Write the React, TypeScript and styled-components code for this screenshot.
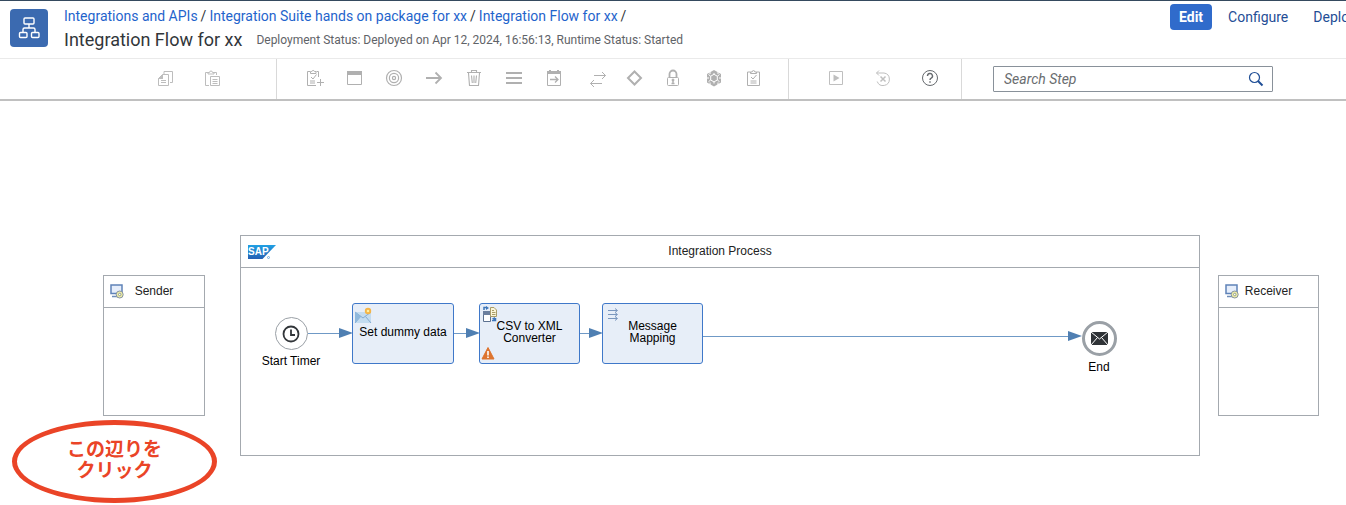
import React from "react";
import styled, { createGlobalStyle } from "styled-components";

const GlobalStyle = createGlobalStyle`
  * { box-sizing: border-box; }
  body {
    margin: 0;
    background: #fff;
    color: #32363a;
    font-family: Roboto, "Noto Sans CJK JP", sans-serif;
    font-size: 14px;
    overflow: hidden;
  }
`;

const Page = styled.div`
  display: flex;
  flex-direction: column;
  min-height: 100vh;
`;

const Header = styled.header`
  display: flex;
  border-top: 1px solid #354a5f;
  height: 58px;
  overflow: hidden;
`;

const AppLogo = styled.div`
  flex: none;
  width: 38px;
  height: 38px;
  margin: 8px 16px 0 10px;
  border-radius: 4px;
  background: #3b6ab0;
  color: #fff;
`;

const Titles = styled.div`
  flex: 1;
  min-width: 0;
  padding-top: 5px;
  white-space: nowrap;
`;

const Breadcrumb = styled.nav`
  display: flex;
  gap: 3px;
  line-height: 20px;
`;

const Crumb = styled.a`
  color: #1f64cc;
  text-decoration: none;
`;

const TitleRow = styled.div`
  display: flex;
  align-items: center;
  gap: 14px;
`;

const Title = styled.h1`
  margin: 0;
  font-size: 18px;
  font-weight: 400;
  line-height: 28px;
`;

const Status = styled.span`
  font-size: 12px;
  color: #5f6368;
`;

const Actions = styled.div`
  display: flex;
  flex: 0 0 176px;
  overflow: hidden;
  align-items: flex-start;
  padding-top: 3px;
`;

const ActionButton = styled.button<{ $primary?: boolean }>`
  flex: none;
  height: 26px;
  margin-right: 7px;
  padding: 0 9px;
  border: 0;
  border-radius: 4px;
  font: inherit;
  font-weight: ${(p) => (p.$primary ? 700 : 400)};
  background: ${(p) => (p.$primary ? "#306bcb" : "transparent")};
  color: ${(p) => (p.$primary ? "#fff" : "#1f4e96")};
`;

const Toolbar = styled.div`
  display: flex;
  height: 43px;
  border-top: 1px solid #eaeaea;
  border-bottom: 2px solid #c0c0c0;
`;

const ToolGroup = styled.div<{ $start: number; $end: number }>`
  display: flex;
  flex: none;
  padding-left: ${(p) => p.$start}px;
  padding-right: ${(p) => p.$end}px;
  border-right: 1px solid #d9d9d9;
`;

const ToolButton = styled.button<{ $wide?: boolean; $tone?: string }>`
  display: flex;
  align-items: center;
  justify-content: center;
  width: ${(p) => (p.$wide ? 47 : 40)}px;
  padding: 0 0 3px;
  border: 0;
  background: none;
  color: ${(p) => p.$tone || "#b0b0b0"};
`;

const SearchBox = styled.label`
  display: flex;
  align-items: center;
  flex: 0 0 280px;
  height: 26px;
  margin: 7px 0 0 31px;
  padding: 0 8px 0 10px;
  border: 1px solid #89919a;
  border-radius: 1px;
  color: #1f4e96;
`;

const SearchInput = styled.input`
  flex: 1;
  min-width: 0;
  padding: 0;
  border: 0;
  outline: 0;
  background: none;
  font: inherit;
  &::placeholder {
    color: #6a6d70;
    font-style: italic;
    opacity: 1;
  }
`;

const Canvas = styled.main`
  position: relative;
  flex: 1;
  min-height: 404px;
  overflow: hidden;
  font-family: "Liberation Sans", Arial, sans-serif;
  font-size: 12px;
  color: #000;
`;

type Box = { $x: number; $y: number; $w: number; $h: number };

const Pool = styled.section<Box>`
  position: absolute;
  left: ${(p) => p.$x}px;
  top: ${(p) => p.$y}px;
  width: ${(p) => p.$w}px;
  height: ${(p) => p.$h}px;
  border: 1px solid #a4a9af;
`;

const PoolHead = styled.div`
  display: flex;
  align-items: center;
  height: 32px;
  padding: 0 6px;
  border-bottom: 1px solid #a4a9af;
  color: #222;
`;

const PoolName = styled.span<{ $iconWidth: number }>`
  flex: 1;
  padding-right: ${(p) => p.$iconWidth}px;
  padding-bottom: 2px;
  text-align: center;
`;

const Flows = styled.svg`
  position: absolute;
  left: 0;
  top: 0;
  width: 100%;
  height: 100%;
  pointer-events: none;
`;

const Step = styled.div<Box>`
  position: absolute;
  left: ${(p) => p.$x}px;
  top: ${(p) => p.$y}px;
  width: ${(p) => p.$w}px;
  height: ${(p) => p.$h}px;
  display: flex;
  align-items: center;
  justify-content: center;
  padding-bottom: 3px;
  border: 1px solid #3f78c9;
  border-radius: 3px;
  background: #e7eef8;
  line-height: 12px;
  text-align: center;
  white-space: pre-line;
`;

const StepIcon = styled.span<{ $bottom?: boolean }>`
  position: absolute;
  left: 1px;
  ${(p) => (p.$bottom ? "bottom: 3px;" : "top: 2px;")}
  line-height: 0;
`;

const Event = styled.div<{ $x: number; $y: number }>`
  position: absolute;
  left: ${(p) => p.$x}px;
  top: ${(p) => p.$y}px;
  width: 80px;
  display: flex;
  flex-direction: column;
  align-items: center;
  gap: 4px;
  line-height: 15px;
`;

const EventCircle = styled.div<{ $end?: boolean }>`
  display: flex;
  align-items: center;
  justify-content: center;
  width: ${(p) => (p.$end ? 35 : 33)}px;
  height: ${(p) => (p.$end ? 35 : 33)}px;
  border: ${(p) => (p.$end ? "3px" : "1px")} solid #9aa0a6;
  border-radius: 50%;
  background: #fff;
`;

const Callout = styled.div`
  position: absolute;
  left: 12px;
  top: 319px;
  width: 205px;
  height: 83px;
  display: flex;
  align-items: center;
  justify-content: center;
  padding-bottom: 7px;
  border: 5px solid #ea4427;
  border-radius: 50%;
  color: #ea4427;
  font-family: "Noto Sans CJK JP", sans-serif;
  font-size: 19px;
  font-weight: 700;
  line-height: 21px;
  text-align: center;
  white-space: pre-line;
`;

function Icon({ size = 18, sw = 1, children }: { size?: number; sw?: number; children: React.ReactNode }) {
  return (
    <svg width={size} height={size} viewBox={`0 0 ${size} ${size}`} fill="none" stroke="currentColor" strokeWidth={sw} overflow="visible" aria-hidden="true">
      {children}
    </svg>
  );
}

const tools = [
  {
    label: "Add task",
    icon: (
      <Icon>
        <path d="M5 2.500H2.500v14H11M11.500 2.500h2V8M5.500 4.500v-2h1.300a1.400 1.400 0 0 1 2.700 0H11v2zM6 8l2 2 3.500-4.500M5 12h5M5 14h5M15.500 10v7M12 13.500h7" />
      </Icon>
    ),
  },
  {
    label: "Process",
    icon: (
      <Icon>
        <path d="M2.500 2.500h14v13h-14z" />
        <path d="M2 2h15v4H2z" fill="currentColor" stroke="none" />
      </Icon>
    ),
  },
  {
    label: "Events",
    icon: (
      <Icon sw={1.2}>
        <circle cx="9" cy="9" r="7.500" />
        <circle cx="9" cy="9" r="4.600" />
        <circle cx="9" cy="9" r="1.600" />
      </Icon>
    ),
  },
  {
    label: "Connector",
    icon: (
      <Icon sw={1.8}>
        <path d="M1 9h15M10.500 3.500 16 9l-5.500 5.500" />
      </Icon>
    ),
  },
  {
    label: "Delete",
    icon: (
      <Icon sw={1.1}>
        <path d="M2 3.500h14M6.500 3V1.500h5V3M3.500 4l1 12.500h9l1-12.500M6.500 6.500l.8 7.500M9 6.500V14M11.500 6.500l-.8 7.500" />
      </Icon>
    ),
  },
  {
    label: "Mapping",
    icon: (
      <Icon sw={2}>
        <path d="M1 4h16M1 9h16M1 14h16" />
      </Icon>
    ),
  },
  {
    label: "Call",
    icon: (
      <Icon>
        <path d="M2.500 2.500h13v14h-13z" />
        <path d="M2 2h14v3H2zM4 1h2v2H4zM12 1h2v2h-2z" fill="currentColor" stroke="none" />
        <path d="M5 10.500h8M10 7.500l3 3-3 3" strokeWidth="1.300" />
      </Icon>
    ),
  },
  {
    label: "Message exchange",
    icon: (
      <Icon>
        <path d="M9 6.500h11.500M17 3l3.500 3.500L17 10M17 14.500H5.500M9 11l-3.500 3.500L9 18" />
      </Icon>
    ),
  },
  {
    label: "Routing",
    icon: (
      <Icon sw={2}>
        <path d="M9.500 2.500 16 9l-6.500 6.500L3 9z" />
      </Icon>
    ),
  },
  {
    label: "Security",
    icon: (
      <Icon>
        <rect x="2.500" y="8.500" width="11" height="8" rx="1" />
        <path d="M4.500 8V5a3.500 3.500 0 0 1 7 0v3" strokeWidth="1.800" />
        <path d="M8 11v3.500M6.500 14.500h3" strokeWidth="1.400" />
        <circle cx="8" cy="11" r="1" fill="currentColor" />
      </Icon>
    ),
  },
  {
    label: "Persistence",
    icon: (
      <Icon>
        <path d="M9 1 16 5v8.500L9 17.500 2 13.500V5z" fill="currentColor" stroke="none" />
        <path d="M9 5.300l3.300 1.900v3.800L9 12.900l-3.300-1.900V7.200zM9 5.300V4M5.700 7.200 3.500 5.500M12.300 7.200l2.200-1.700M5.700 11l-2.200 1.700M12.300 11l2.200 1.700M9 13v1.500M5 3v2M13 3v2M1.500 9H4M14 9h2.500M5 13.500v3M13 13.500v3" stroke="#fff" />
      </Icon>
    ),
  },
  {
    label: "Validator",
    icon: (
      <Icon>
        <path d="M5.500 3H2.500v13.500h12V3h-3M5.500 4.500V3h1.600a1.400 1.400 0 0 1 2.800 0h1.600v1.500zM6 8l2 2 3.500-4M5.500 12h6M5.500 14h6" />
      </Icon>
    ),
  },
];

function Computer() {
  return (
    <svg width="14" height="15" viewBox="0 0 14 15" aria-hidden="true">
      <path d="M1 1h11v8.500H1z" fill="#e6eefb" stroke="#5f83b8" strokeWidth="1.500" />
      <path d="M2 12.500h6" stroke="#6f8db8" strokeWidth="1.500" />
      <circle cx="9.700" cy="10.500" r="3.500" fill="#eceba5" stroke="#8794a3" />
      <circle cx="9.700" cy="10.500" r="1.200" fill="#fff" stroke="#7f8d7f" strokeWidth=".800" />
    </svg>
  );
}

function SapLogo() {
  return (
    <svg width="28" height="14" viewBox="0 0 28 14" overflow="visible" role="img" aria-label="SAP">
      <defs>
        <linearGradient id="sap" x1="0" y1="0" x2="0" y2="1">
          <stop offset="0" stopColor="#20a0e4" />
          <stop offset="1" stopColor="#2560b4" />
        </linearGradient>
      </defs>
      <path d="M1 0h28L15.500 14H1z" fill="url(#sap)" />
      <text x="1" y="10" fontFamily="Liberation Sans, Arial, sans-serif" fontWeight="700" fontSize="10" fill="#fff">SAP</text>
      <circle cx="21.500" cy="12.500" r="1" fill="none" stroke="#5d9ad4" strokeWidth=".800" />
    </svg>
  );
}

const arrows = [
  { from: 308, to: 353, y: 232 },
  { from: 454, to: 480, y: 232 },
  { from: 580, to: 603, y: 232 },
  { from: 703, to: 1082, y: 235 },
];

export default function App() {
  return (
    <Page>
      <GlobalStyle />
      <Header>
        <AppLogo>
          <Icon size={38} sw={1.4}>
            <rect x="14" y="9" width="10" height="6" rx="1" />
            <rect x="9.500" y="23.500" width="7.500" height="5" rx="1" />
            <rect x="21.500" y="23.500" width="7.500" height="5" rx="1" />
            <path d="M19 15v4M13 23v-2.500q0-1.500 1.500-1.500h9q1.500 0 1.500 1.500V23" />
          </Icon>
        </AppLogo>
        <Titles>
          <Breadcrumb aria-label="Breadcrumb">
            <Crumb href="#apis">Integrations and APIs</Crumb>
            <span>/</span>
            <Crumb href="#package">Integration Suite hands on package for xx</Crumb>
            <span>/</span>
            <Crumb href="#flow">Integration Flow for xx</Crumb>
            <span>/</span>
          </Breadcrumb>
          <TitleRow>
            <Title>Integration Flow for xx</Title>
            <Status>Deployment Status: Deployed on Apr 12, 2024, 16:56:13, Runtime Status: Started</Status>
          </TitleRow>
        </Titles>
        <Actions>
          <ActionButton $primary>Edit</ActionButton>
          <ActionButton>Configure</ActionButton>
          <ActionButton>Deploy</ActionButton>
        </Actions>
      </Header>

      <Toolbar role="toolbar" aria-label="Editor tools">
        <ToolGroup $start={142} $end={40}>
          <ToolButton $wide $tone="#bdbdbd" aria-label="Copy">
            <Icon>
              <path d="M5.500 5.500h6v11h-10v-7zM1.500 9.500h4v-4M7 5V2.500h8.500v11H13M4 11.500h5M4 13.500h5" />
              <path d="M2 9.500 5.500 6v3.500z" fill="currentColor" />
            </Icon>
          </ToolButton>
          <ToolButton $wide $tone="#bdbdbd" aria-label="Paste">
            <Icon>
              <path d="M5 3.500H1.500v13H5M10 3.500h2.500V6M4 5V3.500h1.500a1.500 1.500 0 0 1 3 0H10V5zM6.500 7.500h9v9h-9zM8.500 10.500h5M8.500 12.500h5M8.500 14.500h5" />
            </Icon>
          </ToolButton>
        </ToolGroup>
        <ToolGroup $start={17} $end={14}>
          {tools.map((t) => (
            <ToolButton key={t.label} aria-label={t.label}>{t.icon}</ToolButton>
          ))}
        </ToolGroup>
        <ToolGroup $start={23} $end={8}>
          <ToolButton $wide $tone="#bfbfbf" aria-label="Run">
            <Icon>
              <path d="M2.500 2.500h13v13h-13z" />
              <path d="M6.500 5.500v7l6-3.500z" fill="currentColor" stroke="none" />
            </Icon>
          </ToolButton>
          <ToolButton $wide $tone="#bfbfbf" aria-label="Reset">
            <Icon>
              <path d="M2.500 4H10a6.300 6.300 0 1 1-6.800 8.500M5 1.500 2.500 4 5 6.500" />
              <path d="M6.500 7.500l5 5M11.500 7.500l-5 5" strokeWidth="1.500" />
            </Icon>
          </ToolButton>
          <ToolButton $wide $tone="#666a6e" aria-label="Help">
            <Icon>
              <circle cx="9" cy="9" r="7.500" />
              <path d="M6.500 7a2.500 2.500 0 1 1 3.700 2.200Q9 9.800 9 11M9 12.300v1.500" strokeWidth="1.400" />
            </Icon>
          </ToolButton>
        </ToolGroup>
        <SearchBox>
          <SearchInput type="text" placeholder="Search Step" aria-label="Search Step" />
          <Icon size={16}>
            <circle cx="6.500" cy="6.500" r="5" strokeWidth="1.200" />
            <path d="M10 10l4.500 4.500" strokeWidth="2" />
          </Icon>
        </SearchBox>
      </Toolbar>

      <Canvas>
        <Pool $x={103} $y={174} $w={102} $h={141}>
          <PoolHead>
            <Computer />
            <PoolName $iconWidth={14}>Sender</PoolName>
          </PoolHead>
        </Pool>
        <Pool $x={240} $y={134} $w={960} $h={221}>
          <PoolHead>
            <SapLogo />
            <PoolName $iconWidth={28}>Integration Process</PoolName>
          </PoolHead>
        </Pool>
        <Pool $x={1218} $y={174} $w={101} $h={141}>
          <PoolHead>
            <Computer />
            <PoolName $iconWidth={14}>Receiver</PoolName>
          </PoolHead>
        </Pool>

        <Flows aria-hidden="true">
          {arrows.map((a) => (
            <g key={a.from}>
              <path d={`M${a.from} ${a.y + 0.5}H${a.to - 10}`} stroke="#6f99c6" />
              <path d={`M${a.to} ${a.y}l-14-5v10z`} fill="#4f7fb2" />
            </g>
          ))}
        </Flows>

        <Event $x={251} $y={216}>
          <EventCircle>
            <Icon sw={1.8}>
              <circle cx="9" cy="9" r="7.500" stroke="#32363a" />
              <path d="M9 4.500V10h4" stroke="#32363a" />
            </Icon>
          </EventCircle>
          Start Timer
        </Event>

        <Step $x={352} $y={202} $w={102} $h={61}>
          <StepIcon>
            <svg width="18" height="18" viewBox="0 0 18 18" aria-hidden="true">
              <path d="M1 6h16v11H1z" fill="#c3dcf0" />
              <path d="M1 6l8 6 8-6M1 17l5.500-6.500M17 17l-5.500-6.500" stroke="#86abd0" fill="none" />
              <path d="M1 6v11l6-6.500z" fill="#8fb9dd" />
              <circle cx="14" cy="5" r="3.200" fill="#f5b548" />
              <circle cx="14" cy="5" r="1.300" fill="#fff0a0" />
            </svg>
          </StepIcon>
          Set dummy data
        </Step>
        <Step $x={479} $y={202} $w={101} $h={61}>
          <StepIcon>
            <svg width="18" height="18" viewBox="0 0 18 18" fill="none" aria-hidden="true">
              <path d="M2.500 7.500h7v8h-7z" fill="#fff" stroke="#5c7190" />
              <path d="M2 5h8v4H2z" fill="#6b7f9e" />
              <path d="M9.500 1.500v9h6V4l-2.500-2.500z" fill="#fbf6d8" stroke="#a99c68" />
              <path d="M11 4.500h2M11 6.500h3.500M11 8.500h3.500" stroke="#a99c68" />
              <path d="M3 4V1.500h3M11 14.500h3.500V12" stroke="#3e76b8" strokeWidth="1.500" />
              <path d="M5 0l3 2-3 2zM11 12.500l3-1.500v4z" fill="#3e76b8" />
            </svg>
          </StepIcon>
          {"CSV to XML\nConverter"}
          <StepIcon $bottom>
            <svg width="14" height="13" viewBox="0 0 14 13" aria-hidden="true">
              <path d="M7 .500 13 12H1z" fill="#dd7430" stroke="#dd7430" strokeLinejoin="round" />
              <path d="M7 4v4.500M7 9.500V11" stroke="#fff" strokeWidth="1.600" />
            </svg>
          </StepIcon>
        </Step>
        <Step $x={602} $y={202} $w={101} $h={61}>
          <StepIcon>
            <svg width="18" height="18" viewBox="0 0 18 18" fill="none" stroke="#7b97be" aria-hidden="true">
              <path d="M4 4.500h9M4 8.500h9M4 12.500h9M11 2.500l2.500 2-2.500 2M11 6.500l2.500 2-2.500 2M11 10.500l2.500 2-2.500 2" />
            </svg>
          </StepIcon>
          {"Message\nMapping"}
        </Step>

        <Event $x={1059} $y={220}>
          <EventCircle $end>
            <svg width="17" height="13" viewBox="0 0 17 13" aria-hidden="true">
              <path d="M0 0h17v13H0z" fill="#2f3337" />
              <path d="M0 0l8.500 7L17 0M0 13l6.500-7.500M17 13l-6.500-7.500" stroke="#fff" fill="none" />
            </svg>
          </EventCircle>
          End
        </Event>

        <Callout>{"この辺りを\nクリック"}</Callout>
      </Canvas>
    </Page>
  );
}
